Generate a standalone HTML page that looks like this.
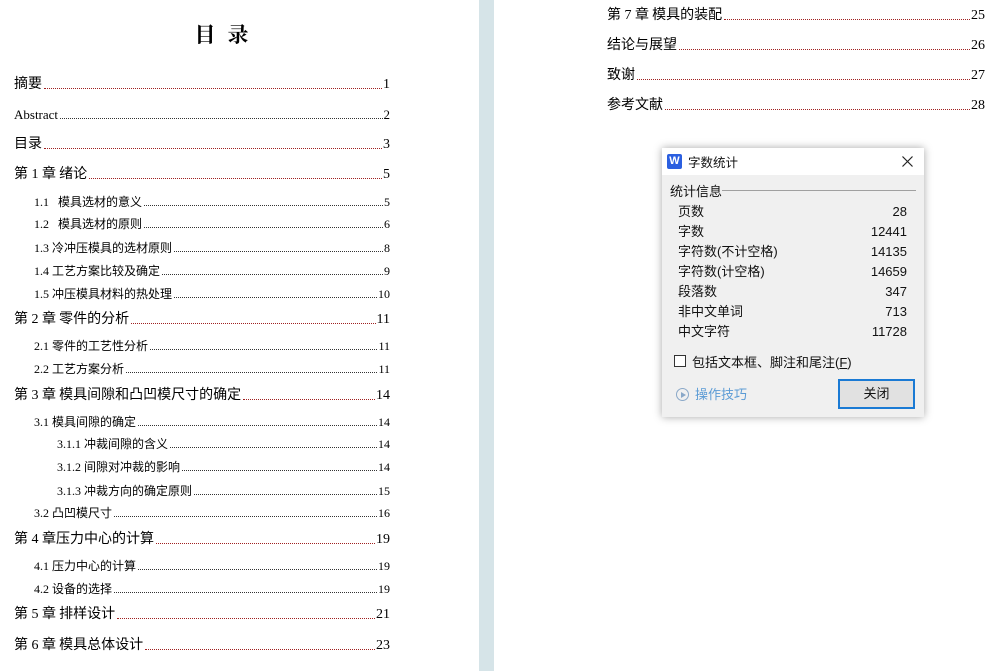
<!DOCTYPE html>
<html><head><meta charset="utf-8">
<style>
*{margin:0;padding:0;box-sizing:border-box}
body{width:990px;height:671px;overflow:hidden;background:#fff;position:relative;font-family:"Liberation Serif","Noto Sans CJK SC",serif;color:#000}
.sep{position:absolute;left:479px;top:0;width:15px;height:671px;background:#d6e4e8}
.r{position:absolute;display:flex;align-items:flex-end;height:18px;white-space:nowrap}
.r .t{padding-right:1px}
.r .d{flex:1;border-bottom:1px dotted #333;margin-bottom:4px;margin-left:1px;margin-right:1px}
.c .d{border-bottom-color:#a02020}
.c{font-size:14px}
.s{font-size:12px}
.cj{font-family:"Noto Sans CJK SC","WenQuanYi Zen Hei",sans-serif;font-weight:400}
.title{position:absolute;left:0;width:455px;top:19px;text-align:center;font-size:21px;font-weight:bold;letter-spacing:12px;font-family:"Noto Serif CJK SC","Noto Sans CJK SC",serif}
.dlg{position:absolute;left:662px;top:148px;width:262px;height:269px;background:#f0f0f0;box-shadow:0 0 8px rgba(0,0,0,.35);font-family:"Liberation Sans","Noto Sans CJK SC",sans-serif;font-size:13px;color:#111}
.tb{height:27px;background:#fff;position:relative}
.w{position:absolute;left:5px;top:6px;width:15px;height:15px;background:#2b5fe0;color:#fff;font:bold 11px/15px "Liberation Sans",sans-serif;text-align:center;border-radius:2px}
.row{position:absolute;left:16px;width:229px;display:flex;justify-content:space-between;align-items:baseline;font-size:13px;line-height:18px}
</style></head><body>
<div class="title">目录</div>
<div class="sep"></div>

<div class="r c" style="left:14px;width:376px;top:75px"><span class="t cj">摘要</span><span class="d"></span><span>1</span></div>
<div class="r" style="left:14px;width:376px;top:105px;font-size:13px"><span class="t">Abstract</span><span class="d"></span><span>2</span></div>
<div class="r c" style="left:14px;width:376px;top:135px"><span class="t cj">目录</span><span class="d"></span><span>3</span></div>
<div class="r c" style="left:14px;width:376px;top:165px"><span class="t"><span class="cj">第</span> 1 <span class="cj">章 绪论</span></span><span class="d"></span><span>5</span></div>
<div class="r s" style="left:34px;width:356px;top:192px"><span class="t">1.1&nbsp;&nbsp; <span class="cj">模具选材的意义</span></span><span class="d"></span><span>5</span></div>
<div class="r s" style="left:34px;width:356px;top:214px"><span class="t">1.2&nbsp;&nbsp; <span class="cj">模具选材的原则</span></span><span class="d"></span><span>6</span></div>
<div class="r s" style="left:34px;width:356px;top:238px"><span class="t">1.3 <span class="cj">冷冲压模具的选材原则</span></span><span class="d"></span><span>8</span></div>
<div class="r s" style="left:34px;width:356px;top:261px"><span class="t">1.4 <span class="cj">工艺方案比较及确定</span></span><span class="d"></span><span>9</span></div>
<div class="r s" style="left:34px;width:356px;top:284px"><span class="t">1.5 <span class="cj">冲压模具材料的热处理</span></span><span class="d"></span><span>10</span></div>
<div class="r c" style="left:14px;width:376px;top:310px"><span class="t"><span class="cj">第</span> 2 <span class="cj">章 零件的分析</span></span><span class="d"></span><span>11</span></div>
<div class="r s" style="left:34px;width:356px;top:336px"><span class="t">2.1 <span class="cj">零件的工艺性分析</span></span><span class="d"></span><span>11</span></div>
<div class="r s" style="left:34px;width:356px;top:359px"><span class="t">2.2 <span class="cj">工艺方案分析</span></span><span class="d"></span><span>11</span></div>
<div class="r c" style="left:14px;width:376px;top:386px"><span class="t"><span class="cj">第</span> 3 <span class="cj">章 模具间隙和凸凹模尺寸的确定</span></span><span class="d"></span><span>14</span></div>
<div class="r s" style="left:34px;width:356px;top:412px"><span class="t">3.1 <span class="cj">模具间隙的确定</span></span><span class="d"></span><span>14</span></div>
<div class="r s" style="left:57px;width:333px;top:434px"><span class="t">3.1.1 <span class="cj">冲裁间隙的含义</span></span><span class="d"></span><span>14</span></div>
<div class="r s" style="left:57px;width:333px;top:457px"><span class="t">3.1.2 <span class="cj">间隙对冲裁的影响</span></span><span class="d"></span><span>14</span></div>
<div class="r s" style="left:57px;width:333px;top:481px"><span class="t">3.1.3 <span class="cj">冲裁方向的确定原则</span></span><span class="d"></span><span>15</span></div>
<div class="r s" style="left:34px;width:356px;top:503px"><span class="t">3.2 <span class="cj">凸凹模尺寸</span></span><span class="d"></span><span>16</span></div>
<div class="r c" style="left:14px;width:376px;top:530px"><span class="t"><span class="cj">第</span> 4 <span class="cj">章压力中心的计算</span></span><span class="d"></span><span>19</span></div>
<div class="r s" style="left:34px;width:356px;top:556px"><span class="t">4.1 <span class="cj">压力中心的计算</span></span><span class="d"></span><span>19</span></div>
<div class="r s" style="left:34px;width:356px;top:579px"><span class="t">4.2 <span class="cj">设备的选择</span></span><span class="d"></span><span>19</span></div>
<div class="r c" style="left:14px;width:376px;top:605px"><span class="t"><span class="cj">第</span> 5 <span class="cj">章 排样设计</span></span><span class="d"></span><span>21</span></div>
<div class="r c" style="left:14px;width:376px;top:636px"><span class="t"><span class="cj">第</span> 6 <span class="cj">章 模具总体设计</span></span><span class="d"></span><span>23</span></div>

<div class="r c" style="left:607px;width:378px;top:6px"><span class="t"><span class="cj">第</span> 7 <span class="cj">章 模具的装配</span></span><span class="d"></span><span>25</span></div>
<div class="r c" style="left:607px;width:378px;top:36px"><span class="t cj">结论与展望</span><span class="d"></span><span>26</span></div>
<div class="r c" style="left:607px;width:378px;top:66px"><span class="t cj">致谢</span><span class="d"></span><span>27</span></div>
<div class="r c" style="left:607px;width:378px;top:96px"><span class="t cj">参考文献</span><span class="d"></span><span>28</span></div>

<div class="dlg">
 <div class="tb"><div class="w">W</div><span style="position:absolute;left:26px;top:4px;font-size:12.5px">字数统计</span>
  <svg style="position:absolute;right:11px;top:8px" width="11" height="11" viewBox="0 0 11 11"><path d="M0.5 0.5L10.5 10.5M10.5 0.5L0.5 10.5" stroke="#222" stroke-width="1.2"/></svg></div>
 <div style="position:absolute;left:8px;top:33px">统计信息</div>
 <div style="position:absolute;left:60px;right:8px;top:42px;border-top:1px solid #a0a0a0"></div>
 <div class="row" style="top:55px"><span>页数</span><span>28</span></div>
 <div class="row" style="top:75px"><span>字数</span><span>12441</span></div>
 <div class="row" style="top:95px"><span>字符数(不计空格)</span><span>14135</span></div>
 <div class="row" style="top:115px"><span>字符数(计空格)</span><span>14659</span></div>
 <div class="row" style="top:135px"><span>段落数</span><span>347</span></div>
 <div class="row" style="top:155px"><span>非中文单词</span><span>713</span></div>
 <div class="row" style="top:175px"><span>中文字符</span><span>11728</span></div>
 <div style="position:absolute;left:12px;top:207px;width:12px;height:12px;border:1px solid #333;background:#fff"></div>
 <div style="position:absolute;left:30px;top:204px">包括文本框、脚注和尾注(<u>F</u>)</div>
 <div style="position:absolute;left:14px;top:240px;width:13px;height:13px;border:1px solid #8aa8c8;border-radius:50%"></div>
 <div style="position:absolute;left:19px;top:244px;width:0;height:0;border-left:5px solid #8aa8c8;border-top:3px solid transparent;border-bottom:3px solid transparent"></div>
 <div style="position:absolute;left:33px;top:236px;color:#5b9bd5">操作技巧</div>
 <div style="position:absolute;left:176px;top:231px;width:77px;height:30px;border:2px solid #1a7ad4;background:#e1e1e1;text-align:center;line-height:26px">关闭</div>
</div>
</body></html>
